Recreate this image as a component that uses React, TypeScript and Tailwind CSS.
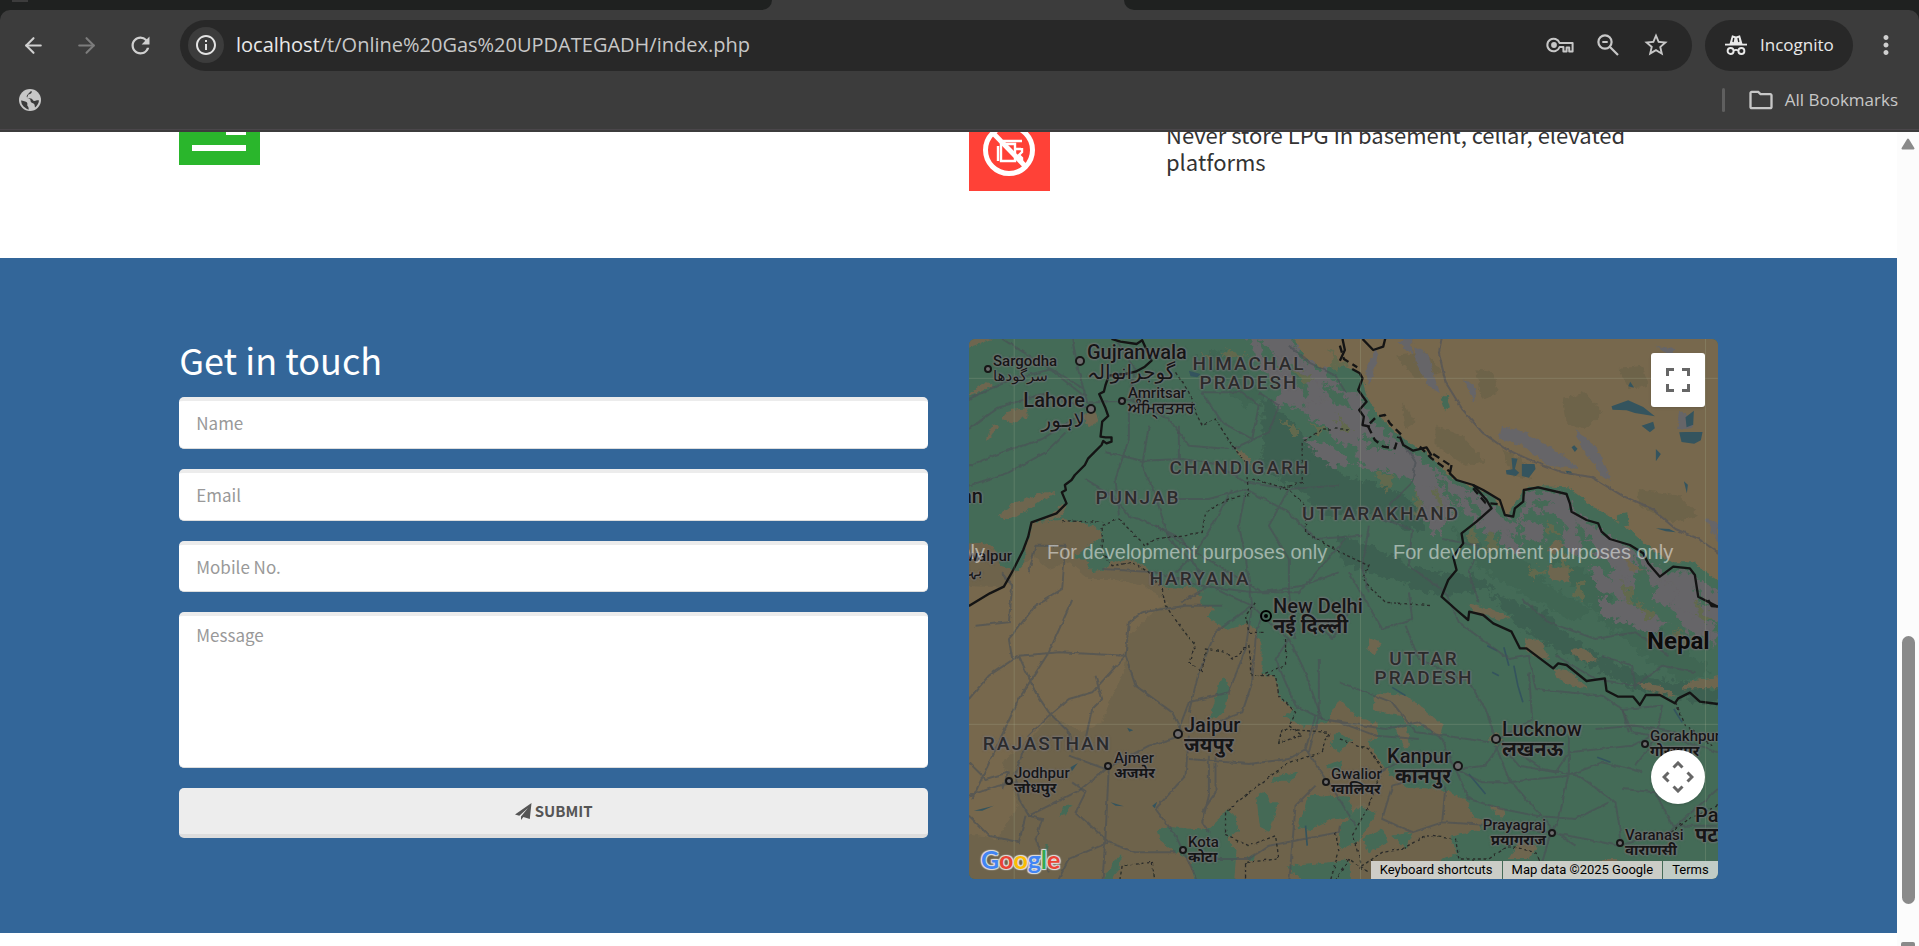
import { LuArrowLeft, LuArrowRight } from 'react-icons/lu';
import {
  MdInfoOutline,
  MdMoreVert,
  MdOutlineFolder,
  MdRefresh,
  MdStarOutline,
} from 'react-icons/md';

type Place = {
  name: string;
  native?: string;
  x: number;
  y: number;
  size: 'sm' | 'lg';
  end?: boolean;
  arabic?: boolean;
  dot?: [number, number];
};

const places: Place[] = [
  { name: 'Sargodha', native: 'سرگودھا', x: 24, y: 15, size: 'sm', arabic: true, dot: [19, 30] },
  { name: 'Gujranwala', native: 'گوجرانوالہ', x: 118, y: 3, size: 'lg', arabic: true, dot: [111, 22] },
  { name: 'Lahore', native: 'لاہور', x: 116, y: 51, size: 'lg', end: true, arabic: true, dot: [122, 70] },
  { name: 'Amritsar', native: 'ਅੰਮ੍ਰਿਤਸਰ', x: 159, y: 47, size: 'sm', dot: [153, 62] },
  { name: 'Multan', x: 14, y: 147, size: 'lg', end: true },
  { name: 'Bahawalpur', native: 'بہاولپور', x: -36, y: 210, size: 'sm', arabic: true },
  { name: 'New Delhi', native: 'नई दिल्ली', x: 304, y: 257, size: 'lg' },
  { name: 'Jaipur', native: 'जयपुर', x: 215, y: 376, size: 'lg', dot: [209, 395] },
  { name: 'Ajmer', native: 'अजमेर', x: 145, y: 412, size: 'sm', dot: [139, 427] },
  { name: 'Jodhpur', native: 'जोधपुर', x: 45, y: 427, size: 'sm', dot: [40, 442] },
  { name: 'Kota', native: 'कोटा', x: 219, y: 496, size: 'sm', dot: [214, 511] },
  { name: 'Gwalior', native: 'ग्वालियर', x: 362, y: 428, size: 'sm', dot: [357, 443] },
  { name: 'Lucknow', native: 'लखनऊ', x: 533, y: 380, size: 'lg', dot: [527, 400] },
  { name: 'Kanpur', native: 'कानपुर', x: 482, y: 407, size: 'lg', end: true, dot: [489, 427] },
  { name: 'Gorakhpur', native: 'गोरखपुर', x: 681, y: 390, size: 'sm', dot: [676, 405] },
  { name: 'Prayagraj', native: 'प्रयागराज', x: 577, y: 479, size: 'sm', end: true, dot: [583, 494] },
  { name: 'Varanasi', native: 'वाराणसी', x: 656, y: 489, size: 'sm', dot: [651, 504] },
  { name: 'Patna', native: 'पटना', x: 726, y: 466, size: 'lg' },
];

const regions = [
  { lines: ['HIMACHAL', 'PRADESH'], x: 280, y: 15 },
  { lines: ['CHANDIGARH'], x: 271, y: 119 },
  { lines: ['PUNJAB'], x: 169, y: 149 },
  { lines: ['UTTARAKHAND'], x: 412, y: 165 },
  { lines: ['HARYANA'], x: 231, y: 230 },
  { lines: ['RAJASTHAN'], x: 78, y: 395 },
  { lines: ['UTTAR', 'PRADESH'], x: 455, y: 310 },
];

const halo = '[text-shadow:0_0_2px_#78767a,0_0_2px_#78767a,0_0_3px_#78767a]';

const iconButton = 'flex items-center justify-center';

const field =
  'block w-full rounded-[5px] border-x-0 border-t-4 border-b border-t-[#ececec] border-b-[#dddddd] bg-white px-[17px] text-[17px] text-[#555555] outline-none placeholder:text-[#999999]';

const BrowserBar = () => {
  return (
    <header className="shrink-0 bg-[#3c3c3c] font-['Open_Sans','Noto_Sans',sans-serif]">
      <div className="flex h-[10px] bg-[#3c3c3c]">
        <div className="w-[772px] rounded-br-[14px] bg-[#1f2120]">
          <div className="ml-3 h-[2px] w-4 bg-[#3c3c3c]" />
        </div>
        <div className="w-[352px]" />
        <div className="flex-1 rounded-bl-[14px] bg-[#1f2120]" />
      </div>
      <div className="bg-[#1f2120]">
        <div className="flex h-[70px] items-center rounded-t-[10px] bg-[#3c3c3c]">
          <div className="flex w-[180px] items-center gap-7 pl-[21px] text-[#d0d0d0]">
            <button className={iconButton} aria-label="Back">
              <LuArrowLeft size={25} strokeWidth={2} />
            </button>
            <button className={`${iconButton} text-[#7c7c7c]`} aria-label="Forward">
              <LuArrowRight size={25} strokeWidth={2} />
            </button>
            <button className={iconButton} aria-label="Reload">
              <MdRefresh size={27} />
            </button>
          </div>
          <div className="flex h-[51px] flex-1 items-center rounded-full bg-[#282828] pr-[22px] pl-2">
            <button
              className="flex h-9 w-9 items-center justify-center rounded-full bg-[#3c3c3c] text-[#e3e3e3]"
              aria-label="Site information"
            >
              <MdInfoOutline size={24} />
            </button>
            <p className="flex-1 pl-3 text-[20px] leading-7 text-[#c7c7c7]">
              <span className="text-[#e9e9e9]">localhost</span>
              /t/Online%20Gas%20UPDATEGADH/index.php
            </p>
            <div className="flex items-center gap-[22px] text-[#c7c7c7]">
              <button className={iconButton} aria-label="Passwords">
                <svg width="28" height="18" viewBox="0 0 28 18" fill="none" stroke="currentColor">
                  <path
                    d="M13.6 7h13v8.4h-3.4v-4h-2.6v4h-3.2V11h-3.8a6.3 6.3 0 1 1 0-4Z"
                    strokeWidth="2"
                    strokeLinejoin="round"
                  />
                  <circle cx="8" cy="9" r="2.9" fill="currentColor" stroke="none" />
                </svg>
              </button>
              <button className={iconButton} aria-label="Zoom">
                <svg width="24" height="24" viewBox="0 0 24 24" fill="none" stroke="currentColor">
                  <circle cx="9" cy="9" r="6.6" strokeWidth="2.2" />
                  <path d="M14 14l8 8M6.3 9h5.4" strokeWidth="2.2" />
                </svg>
              </button>
              <button className={iconButton} aria-label="Bookmark this page">
                <MdStarOutline size={28} />
              </button>
            </div>
          </div>
          <button className="ml-[13px] flex h-[51px] w-[148px] items-center gap-[13px] rounded-full bg-[#282828] pl-5 text-[17px] text-[#e9e9e9]">
            <svg width="22" height="22" viewBox="0 0 22 22" fill="none" stroke="currentColor">
              <path d="M4.5 10 7 1.2l4 1.3 4-1.3L17.5 10Z" fill="currentColor" stroke="none" />
              <path d="M8 8l.8-4M13.8 8 13 4" stroke="#282828" strokeWidth="1.4" />
              <path d="M0 10.6h22" strokeWidth="1.8" />
              <circle cx="5.6" cy="17" r="3" strokeWidth="1.9" />
              <circle cx="16.4" cy="17" r="3" strokeWidth="1.9" />
              <path d="M8.6 16.6q2.4-1.4 4.8 0" strokeWidth="1.6" />
            </svg>
            Incognito
          </button>
          <button className="flex w-[66px] items-center justify-center text-[#d0d0d0]" aria-label="Menu">
            <MdMoreVert size={30} />
          </button>
        </div>
      </div>
      <nav className="flex h-[50px] items-center justify-between border-b border-[#4a464a] pr-[21px] pb-[10px] pl-[17px] text-[#c7c7c7]">
        <button className={iconButton} aria-label="Bookmark">
          <svg width="26" height="26" viewBox="0 0 26 26" fill="currentColor">
            <circle cx="13" cy="13" r="11" />
            <path
              d="M4 13.5c2 .5 5 .5 6 2 1 1.5-.5 3 1 4 1 1 0 2.5 1.5 3a9.5 9.5 0 0 1-8.500-9ZM14.5 4c1 2-1 3-3 3.5-1 .5 0 2-1.5 2.500 0 1.500 2 1 4 1.500s1.500 2.500 3.500 2.500 2-1 4.500-.5c-.3 3-2 5.500-4 7-.5-2 0-3-1.500-4s-3-1-3-3-2.500-1.500-3.500-3 .5-3 2-4.500 1-1.500 2.500-2Z"
              fill="#3c3c3c"
            />
          </svg>
        </button>
        <div className="flex items-center">
          <span className="h-6 w-[3px] rounded-full bg-[#5f5f5f]" />
          <button className="ml-[22px] flex items-center gap-[10px] text-[17px]">
            <MdOutlineFolder size={28} />
            All Bookmarks
          </button>
        </div>
      </nav>
      <div className="h-[2px] bg-[#3c3c3c]" />
    </header>
  );
};

const SafetyTips = () => {
  return (
    <section className="h-[126px] overflow-hidden bg-white">
      <div className="mx-auto grid w-[81.1%] grid-cols-2 gap-[41px]">
        <div className="-mt-12">
          <svg width="81" height="81" viewBox="0 0 81 81">
            <rect width="81" height="81" fill="#2ab62c" />
            <path d="M13 61h54v6H13zM47 40h20v11H47zM13 14h54v8H13z" fill="#fff" />
          </svg>
        </div>
        <div className="flex">
          <svg className="-mt-[22px] shrink-0" width="81" height="81" viewBox="0 0 81 81">
            <rect width="81" height="81" fill="#ff4137" />
            <g fill="none" stroke="#fff">
              <path d="M34 31h19M29 36v15M32 34h14v17H32ZM46 39h6M46 49h7M53 38v4l-3 3 3 3v3" strokeWidth="2.4" />
              <circle cx="40" cy="40" r="23.5" strokeWidth="5" />
              <path d="M24 23l33 34" strokeWidth="5" />
            </g>
          </svg>
          <p className="-mt-[11px] ml-[116px] max-w-[500px] text-[22px] leading-[27px] text-[#333333]">
            Never store LPG in basement, cellar, elevated platforms
          </p>
        </div>
      </div>
    </section>
  );
};

const ContactForm = () => {
  return (
    <form onSubmit={(event) => event.preventDefault()}>
      <h2 className="h-[58px] text-[36px] leading-10 text-white">Get in touch</h2>
      <div className="flex flex-col gap-5">
        <input type="text" aria-label="Name" placeholder="Name" className={`${field} h-[52px] pb-1`} />
        <input type="email" aria-label="Email" placeholder="Email" className={`${field} h-[52px] pb-1`} />
        <input type="tel" aria-label="Mobile No." placeholder="Mobile No." className={`${field} h-[51px] pb-1`} />
        <textarea
          aria-label="Message"
          placeholder="Message"
          className={`${field} h-[156px] resize-none py-[6px] leading-[26px]`}
        />
        <button
          type="submit"
          className="flex h-[50px] items-center justify-center gap-[3px] rounded-[5px] border-b-4 border-[#dddddd] bg-[#ededed] text-[15px] font-bold text-[#555555]"
        >
          <svg width="17" height="17" viewBox="0 0 17 17" fill="currentColor">
            <path d="M16.5 0 0 11.4l4.3 1.4L13 5 6 13.6V17l2.4-2.9 6.4 1.9Z" />
          </svg>
          SUBMIT
        </button>
      </div>
    </form>
  );
};

const MapTerrain = () => {
  return (
    <svg
      className="block h-full w-full"
      viewBox="0 0 2247 1620"
      preserveAspectRatio="xMidYMid slice"
      fill="none"
      aria-hidden="true"
    >
      <defs>
        <filter id="ragged" x="-5%" y="-5%" width="110%" height="110%">
          <feTurbulence type="fractalNoise" baseFrequency="0.06" numOctaves="3" seed="4" />
          <feDisplacementMap in="SourceGraphic" scale="18" xChannelSelector="R" yChannelSelector="G" />
        </filter>
        <filter id="rugged" x="-5%" y="-5%" width="110%" height="110%">
          <feTurbulence type="fractalNoise" baseFrequency="0.05" numOctaves="3" seed="7" />
          <feDisplacementMap in="SourceGraphic" scale="45" xChannelSelector="R" yChannelSelector="G" />
        </filter>
        <filter id="wavy" x="-5%" y="-5%" width="110%" height="110%">
          <feTurbulence type="fractalNoise" baseFrequency="0.05" numOctaves="2" seed="9" />
          <feDisplacementMap in="SourceGraphic" scale="10" xChannelSelector="R" yChannelSelector="G" />
        </filter>
      </defs>
      <rect width="2247" height="1620" fill="#446b57" />

      <g filter="url(#ragged)">
        {/* southern and western plains */}
        <path
          fill="#6e644c"
          d="M-40 613 35 608 75 625 95 680 160 700 188 550 278 543 345 550 395 575 400 600 355 620 315 655 350 660 370 700 415 690 425 670 490 662 540 690 560 725 600 750 670 745 735 770 735 810 713 833 773 873 843 853 878 913 878 1003 918 1013 933 1073 973 1113 943 1133 1003 1163 1073 1150 1113 1083 1163 1133 1223 1153 1228 1198 1193 1203 1213 1233 1258 1303 1313 1343 1433 1353 1493 1383 1513 1433 1543 1443 1533 1473 1443 1493 1463 1543 1413 1568 1300 1660H-40Z"
        />
        <path
          fill="#77684e"
          d="M-40 740 100 745 190 650 240 690 300 670 360 720 440 720 520 740 600 790 540 830 480 890 465 1000 425 1080 400 1150 340 1180 250 1130 170 1210 100 1270 150 1400 80 1500-40 1480Z"
        />
        {/* high plateau */}
        <path
          fill="#77684e"
          d="M953-40 1010 60 1060 90 1113 75 1175 105 1195 175 1225 225 1285 285 1375 345 1445 415 1565 465 1615 530 1675 440 1795 445 1870 500 1965 560 2060 640 2110 670 2175 670 2290 760V-40Z"
        />
        <path
          fill="#6d6349"
          d="M1280 50l90-10 50 60-80 20ZM1400 260l80 30 70 80-60 10-90-60ZM1780 180l70-20 50 60-50 50-60-20ZM2010 450l120 20 60 60-80 20-100-50ZM1950 90l70-10 20 60-60 10ZM1520 90l50 10 20 60-50 20ZM1300 190l40 60-30 20ZM1600 330l60 30 30 60-60-10Z"
        />
      </g>

      <g filter="url(#rugged)">
        {/* foothills */}
        <path
          fill="#3d6151"
          d="M880 170l100 90 70 90 80 60 160 50 90 80-30 40-160-60-120 10-80-80-110-60ZM1110 590l100 30 130 70 180 20 60 40-170 20-180-60-110-40ZM1560 760l170 60 90 90 200 100 227 40v50l-250-50-240-120-110-70Z"
        />
        <path
          fill="#3f6653"
          d="M680 60l60-30 90 60 60 90-70 20-60-80ZM1450 560l90 60 120 30 80 90 130 70-50 40-170-90-140-90ZM1740 650l140 60 60 90 80 60-90 20-100-120ZM1940 870l100-20 100 70 90 80-90 30-120-80Z"
        />
        {/* snow and rock */}
        <path
          fill="#666567"
          d="M830-40H950L1000 60 1070 100 1130 160 1170 160 1210 250 1290 310 1370 370 1450 430 1550 480 1600 530 1650 550 1675 460 1780 460 1820 520 1890 570 2000 640 2080 700 2170 700 2290 800V870L2200 830 2150 880 2110 800 2060 740 2010 680 1990 750 1930 680 1880 640 1860 590 1800 600 1790 550 1740 520 1670 520 1640 590 1600 570 1560 600 1500 530 1440 480 1460 530 1400 470 1360 500 1330 420 1260 400 1170 380 1160 320 1100 310 1070 260 1010 230 990 170 940 170 930 130 900 110 860 70Z"
        />
        <path
          fill="#666567"
          d="M940 110l100 20 30 50-70 20-80 0ZM1000 300l90 20 60 50-60 20ZM1350 440l70 10 30 80-40 60-50-60ZM1660 540l70 20-10 60-60-20ZM1600 560l60 60-20 40-50-60ZM1790 570l60 20-20 60-50-30ZM1860 680l60 20 10 70-40-10ZM1930 680l60 50-10 70-60-40ZM2070 720l60 30-30 60-50-30ZM1890 780l90 10 110 60-40 40-80-40-80-20ZM2120 800l120 60v60l-100-50Z"
        />
        {/* valleys cutting into the range */}
        <path
          fill="#446b57"
          d="M860-10l50 40 30 70-50-40ZM960 80l50 30 10 60-40-30ZM1060 130l70 40 20 40-60-20ZM1170 290l60 10 50 30-70 0ZM1400 400l40 50 40 50-50-30ZM1490 460l40 40 20 50-40-30ZM1690 480l60 10-40 30ZM1820 540l40 60-30 10ZM2000 650l40 60-30 0ZM2180 740l40 60-30 0Z"
        />
        <path
          fill="#62694e"
          d="M690 40l40 10 10 30ZM930 240l60 30-10 22ZM970 90l70 30-30 20ZM1220 400l60 10-30 50ZM1340 450l30 80-30 10ZM1390 440l40 60-20 20ZM1560 570l30 50-40 30ZM1510 560l20 60-40-10ZM1780 640l30 60-40 20ZM2000 790l60 30-20 30ZM2120 860l40 50-40 20ZM1680 680l60 20-50 20ZM1830 720l20 70-40-20ZM1010 240l70 40-40-5ZM760 30l80 20-60 10ZM1100 220l50 60-30-5ZM1960 720l40 60-30 10ZM2170 780l60 60-30 10ZM1080 30l60 50-40 10ZM1730 540l50 50-40 0Z"
        />
      </g>

      <g filter="url(#ragged)">
        <path
          fill="#666567"
          d="M1600 260l70 20 130 80 30 30-90-10-80-60-70-20ZM1820 270l60 50 50 110-30-20-60-80ZM1340 20l40 30 30 110-30-20-40-70ZM1485 120l40 30-10 40ZM1290 10l40-20 0 60ZM2060 20l60 10-20 20ZM1190 90l30-60 10 20-30 90ZM2130 215l30 10 15 40-50 10ZM2210 540l37 10v60Z"
        />
        {/* scattered dry ground */}
        <path
          fill="#6e6650"
          d="M-40 40 70 0 110-30-40-30ZM-40 190 50 130 75 140-40 185ZM98 243l25-30 50-5v25l-45 20ZM53 303l20-50 18 10-28 35ZM88 528l45-35 90-33h42l-52 28-70 45-50 10ZM223 548l60-55 10 10-15 30ZM340 235l35-30 15 40-30 20ZM795 320l40 30 15 30-30-20ZM1213 1083l20-22 70 7 40 25 80 65-10 35-50-30-50-10-10-20-90-20ZM1278 1168l35-5 10 60-15 2ZM1198 938l5-40 35 15-20 35ZM1803 933l30-8 30 13 20 30-50-5ZM1668 898l45 5 25 55-25 5-40-30ZM1753 988l40 5 68 55-48-5-50-25ZM2003 1028l70 10 50 35-50-10-60-20ZM2133 1053l40-30 90-10v35l-90 0ZM1498 793l45 10 80 30-30 10-80-25ZM1735 680l60 10 10 40-60-10ZM1560 1200l20-20 20 20-20 20ZM1560 1400l50 10-10 30ZM1650 1510l60 10-30 40-60 0ZM1135 1420l50-30 20 20-30 30ZM1890 1560h60l-20 20ZM1735 630l30-30 20 20-30 30ZM1960 650l60 40-30 10Z"
        />
        {/* scattered farmland */}
        <path
          fill="#446b57"
          d="M725 1135l25-100 15-20 15 35-10 60-30 30ZM563 1473l30-10 120 10 30-25 30-35 30 20 5 40-35 30 30 30-10 130-100 0-30-100-50-30-40-30ZM863 1373l25-15 15 35h25l-15 50-10 35-30-15-5-40ZM1013 1383l20-15 110 5 10 60-70 10-60 30-40-10 20-40ZM913 1313l75-15-25 30h-50ZM833 1553l25-5-5 20ZM953 1583l100-10 90-10v90l-120-10ZM1073 1283l50-20-10 40ZM1083 1223l20-45 50 25-40 35ZM443 1553l20 0-20 45-30 50-20-10ZM273 1433l10-30 25-8-15 28ZM1113 1463l60-60 50 20-50 80-60 30ZM230 1515l10 0-5 30-20 10ZM1180 1500l60-30 20 40-60 30ZM1270 1490l60-10-20 50ZM1416 180l20-15 10 40-20 12ZM1940 530l35-8 5 35-20 10ZM690 760l60 0 60 20 60 10 0 40-60 10-40-30-70-10Z"
        />
      </g>

      {/* lakes */}
      <path
        fill="#34545e"
        d="M1928 202l50-18 45 20 35 28-60-10-25-8-42-2ZM2018 260l35-12 5 20-15 12ZM2131 280l20-1h50l-5 25-20 10-38-5ZM2150 235l25-20-2 42-20 8ZM1984 128l12 18-18-4ZM2061 330l15 15-15 22ZM1659 375h38l3 15-20 26-21-5ZM1628 357l18 2-8 30 13 12-10 10-28-5-2-12 20-3ZM1808 325l8-6 10 10-8 10ZM1790 395l15 2 10 12-20-5ZM2145 427l12 10-3 26ZM2061 568l40 2 20 10-30-3ZM660 95l35 10-10 10-20-3ZM305 1285l22-13-18 25ZM425 1390l40 12-25-2ZM550 1400l15-12-7 20ZM15 1415l60-15-35 15ZM475 1166l18 8-12 4Z"
      />
      <path
        stroke="#34545e"
        strokeWidth="5"
        d="M1605 925l15 55M1635 980l12 60 15 50M1570 1000l20 10M1555 920l30 15M1500 1305l50 60M2115 1110l25 40M1010 1460l5 60M1885 1255l40 15M1270 1045l40 25"
      />

      {/* roads */}
      <g stroke="#4a5055" strokeOpacity="0.65" strokeWidth="6" strokeLinejoin="round" filter="url(#wavy)">
        <path d="M0 270 90 205 220 165 350 205M0 180 130 120 250 90 345 150M0 380 100 340 220 300 330 230M0 440 120 400 230 340 290 280M310 0 330 100 355 190 440 190 540 170M100 0 230 80 345 170M440 0 500 90 480 180 600 240 660 320 780 330" />
        <path d="M350 420 430 470 480 530 560 560 640 600 700 720M410 340 520 365 640 360 740 375 830 430 960 450 1110 440M540 260 520 380 560 470 600 600 700 700M630 260 630 360M480 190 480 300 440 420 450 530M600 480 720 480 830 450 960 520 1040 600 1180 590M830 460 810 560 830 650 850 800M790 450 730 560 680 640 620 700M960 450 900 560 960 660 960 760 980 900" />
        <path d="M700 160 760 250 850 300 870 200 820 160ZM790 330 900 280 930 200 870 160M560 560 680 640 780 700 880 760 1000 740 1110 700M400 690 560 700 700 740 850 760 990 760 1130 600M850 800 780 770 720 740 640 790M850 800 900 850 960 900 1000 980 1060 1140M850 800 830 930 780 1060 660 1090 630 1170M880 820 860 900 850 1030 820 1120 720 1160M850 800 740 880 690 1000 660 1120" />
        <path d="M310 783 240 940 150 1080 80 1230 10 1380M0 1080 60 1010 150 950 270 940 470 950 480 850 520 820 650 800 760 800M470 950 500 1040 610 1120 640 1180M470 950 370 1060 300 1080 240 1130 180 1190 140 1300 150 1380 180 1430 330 1355 410 1290 540 1220 640 1190M150 950 200 1060 240 1120 300 1180 310 1240M380 1010 400 1080 370 1110 350 1200M20 860 120 850 130 740 100 700M130 960 120 900 200 800 280 750 290 620 200 620 180 700M0 1270 50 1320 120 1300 100 1350M0 1370 90 1340 140 1330" />
        <path d="M660 1190 650 1310 560 1410 620 1490 670 1590 690 1640M660 1260 840 1275 960 1260 1010 1230 1040 1130M720 1250 720 1370 700 1450 720 1480M740 1250 740 1360 700 1420M420 1280 410 1490 400 1640M300 1250 410 1290M310 1330 350 1360 320 1420 420 1510 500 1540 620 1540M180 1430 220 1440 200 1500 240 1600M0 1430 60 1490 150 1510 170 1430M420 1510 300 1560 260 1640M690 1560 840 1560 900 1520 1110 1480 1113 1460M1010 1230 1080 1330 1160 1460M960 1640 980 1400 1040 1340" />
        <path d="M1020 830 1090 900 1140 820 1180 780M960 900 920 960 980 1100 1060 1140 1113 1150M1050 960 1050 1130 1020 1240M1113 1030 1270 1090 1340 1180 1430 1190 1560 1210M1060 1140 1250 1170 1350 1150 1420 1200 1460 1290M1113 1150 1220 1190 1350 1200M1140 700 1240 870 1330 840 1320 760M1310 860 1350 960 1500 1030 1550 1110 1580 1200M1200 560 1180 690 1200 760M1240 540 1330 570 1320 680 1430 760 1470 850 1620 960M1420 600 1530 620 1500 700 1530 790M1680 1000 1690 1140 1590 1200M1700 1050 1900 1070 1960 1110 1990 1180 2120 1200 2247 1240M1620 960 1680 950 1700 1050" />
        <path d="M1580 1200 1650 1280 1760 1300 1800 1240 1990 1220 2050 1190M1460 1290 1550 1280 1590 1220 1600 1210 1720 1290 1830 1310 1940 1390 1960 1520M1460 1290 1540 1330 1620 1330 1700 1320 1800 1310 1900 1270 2020 1300M1580 1220 1620 1320 1690 1400 1760 1480 1820 1520M1800 1190 1800 1300 1770 1440 1740 1500 1700 1640M1460 1290 1500 1380 1600 1410 1700 1430 1820 1440 1920 1390M1430 1340 1420 1450 1330 1480 1240 1440 1270 1340 1400 1300M1420 1450 1600 1460 1740 1480 1850 1500 1950 1520 2100 1480 2247 1350M1960 1350 2060 1360 2110 1460 2247 1460M1980 1180 1960 1110 2080 1100 2060 1200 2000 1280M1880 1170 2000 1160 2120 1180M1200 1320 1340 1240 1450 1270" />
        <path d="M1130 160 1100 110 1020 70 960 20M1290 290 1340 370 1330 430 1260 500M1760 950 1880 1020 2000 1040 2080 980 2180 1000M1660 780 1740 850 1880 900 2000 880 2100 950M1900 950 1990 980 2000 1050" />
        <path stroke="#595755" strokeOpacity="0.9" d="M1420-10 1410 40 1430 130 1480 210 1540 280 1610 330 1700 370 1780 400 1870 415 1960 470 2050 510 2120 570 2190 600 2260 650" />
      </g>

      {/* state lines */}
      <g stroke="#2a2c2a" strokeWidth="4" strokeDasharray="9 8" filter="url(#wavy)">
        <path d="M620 100 660 160 680 220 700 260 740 240 790 320 830 370 840 470 780 480 710 520 700 580 560 600 530 620 450 540 400 560 400 640 430 680 490 670 540 700 580 750 590 800 640 870 680 920 660 970 700 1000 710 930 770 940 790 960 840 920 850 1010 920 1010 930 1070 980 1120 960 1160 1000 1190 930 1210 940 1170 1080 1180 1060 1240 960 1270 840 1360 770 1420 770 1490 840 1520 920 1490 930 1560 830 1570 830 1640" />
        <path d="M280 545 400 550M850 420 960 450 1010 500 1010 580 1060 610 1113 640 1200 680 1180 720 1250 790 1390 800M1140 270 1060 270 1000 310 1000 430 930 450M950 900 950 980 870 1010M860 790 830 830 840 880 890 880M1113 1200 1200 1230 1240 1290 1200 1400 1150 1490 1180 1580 1240 1540 1300 1530 1370 1490 1460 1500 1470 1560 1560 1560 1620 1520 1700 1540 1740 1620M1100 1480 1110 1540 1080 1640M1090 1640 1140 1560 1200 1600M2120 1090 2150 1160 2230 1220M2247 1400 2160 1440 2080 1500M450 1640 460 1580 550 1570 560 1640" />
      </g>

      {/* borders */}
      <g stroke="#141414" strokeWidth="7" strokeLinejoin="round">
        <path d="M428 0 455 8 503 15 520 4 548 65 528 83 500 98 470 105 420 110 410 138 405 158 391 165 410 208 418 231 400 248 395 293 410 295 428 295 428 308 413 313 403 306 398 318 373 343 358 358 348 378 318 408 308 423 288 438 291 453 279 460 293 493 263 523 188 550 178 593 163 633 133 693 105 743 63 763 0 801" />
        <path d="M1121 0 1128 33 1113 65M1150 90 1173 103 1181 118 1168 153 1193 188 1171 213 1185 233 1181 258 1203 263M1293 293 1303 318 1333 335 1373 325 1388 350M1448 378 1443 403 1463 423 1513 438 1543 453 1593 483 1608 528 1633 533 1638 508 1663 488 1665 453 1708 445 1793 465 1803 493 1808 518 1853 543 1888 553 1898 578 1923 600 1983 618 2023 643 2038 673 2073 713 2113 683 2163 688 2178 708 2188 773 2247 803" />
        <path d="M1181 0 1213 33 1243 23 1250-5M1513 438 1553 483 1568 508 1523 548 1478 583 1483 613 1453 653 1463 693 1438 723 1418 773 1463 813 1498 843 1501 818 1543 828 1573 853 1628 878 1653 928 1673 928 1753 988 1768 973 1793 978 1853 1026 1908 1018 1913 1055 1948 1073 1993 1073 2013 1098 2031 1068 2073 1068 2118 1093 2128 1078 2163 1061 2193 1088 2247 1095M2218 783 2228 801 2247 803" />
        <path strokeDasharray="22 14" d="M1113 20 1125 60 1165 85M1203 253 1223 233 1248 228 1263 253 1303 293M1198 263 1218 303 1243 323 1278 328 1288 293M1353 323 1388 358 1443 398M1393 345 1443 378M1513 448 1550 492 1593 496" />
      </g>

      <g stroke="#b8c0a0" strokeOpacity="0.22" strokeWidth="3">
        <path d="M136 0v1620M1175 0v1620M2210 0v1620M0 118h2247M0 1156h2247" />
      </g>
    </svg>
  );
};

const GoogleLogo = () => {
  return (
    <a
      href="#google"
      aria-label="Open this area in Google Maps"
      className="absolute bottom-[2px] left-3 font-[Lato,sans-serif] text-[25px] leading-9 font-bold [text-shadow:0_0_1px_#ddd,1px_1px_1px_#ddd,-1px_-1px_1px_#ddd,1px_-1px_1px_#ddd,-1px_1px_1px_#ddd]"
    >
      <span className="text-[#4285f4]">G</span>
      <span className="text-[#ea4335]">o</span>
      <span className="text-[#fbbc04]">o</span>
      <span className="text-[#4285f4]">g</span>
      <span className="text-[#34a853]">l</span>
      <span className="text-[#ea4335]">e</span>
    </a>
  );
};

const PlaceLabel = ({ place }: { place: Place }) => {
  const large = place.size === 'lg';
  return (
    <>
      <p
        className={`absolute font-medium whitespace-nowrap text-[#161616] ${halo} ${
          large ? 'text-[20px] leading-5' : 'text-[15px] leading-[15px]'
        } ${place.end ? '-translate-x-full text-right' : ''}`}
        style={{ left: place.x, top: place.y }}
      >
        {place.name}
        {place.native && (
          <>
            <br />
            <span className={place.arabic ? 'font-normal' : 'font-bold'}>{place.native}</span>
          </>
        )}
      </p>
      {place.dot && (
        <span
          className={`absolute -translate-1/2 rounded-full border-2 border-[#161616] bg-[#6e6c6e] ${
            large ? 'h-[10px] w-[10px]' : 'h-2 w-2'
          }`}
          style={{ left: place.dot[0], top: place.dot[1] }}
        />
      )}
    </>
  );
};

const MapView = () => {
  return (
    <div className="relative h-[540px] overflow-hidden rounded-[6px] bg-[#446b57] font-[Roboto,'Noto_Sans','Noto_Sans_Devanagari','DejaVu_Sans',sans-serif]">
      <MapTerrain />
      {regions.map((region) => (
        <p
          key={region.x}
          className={`absolute -translate-x-1/2 text-center text-[19px] leading-[19px] font-medium tracking-[2px] whitespace-nowrap text-[#2b2b2b] ${halo}`}
          style={{ left: region.x, top: region.y }}
        >
          {region.lines.map((line) => (
            <span key={line} className="block">
              {line}
            </span>
          ))}
        </p>
      ))}
      {places.map((place) => (
        <PlaceLabel key={place.name} place={place} />
      ))}
      <span className="absolute top-[277px] left-[297px] flex h-3 w-3 -translate-1/2 items-center justify-center rounded-full border-2 border-black">
        <span className="h-1 w-1 rounded-full bg-black" />
      </span>
      <p className={`absolute top-[290px] left-[678px] text-[24px] leading-6 font-bold text-[#0c0c0c] ${halo}`}>
        Nepal
      </p>

      <div className="absolute top-[201px] left-0 font-['Liberation_Sans',Arial,sans-serif] text-[20px] leading-6 whitespace-nowrap text-white/50">
        <p className="absolute left-4 -translate-x-full">For development purposes only</p>
        <p className="absolute left-[78px]">For development purposes only</p>
        <p className="absolute left-[424px]">For development purposes only</p>
      </div>

      <button
        aria-label="Toggle fullscreen view"
        className="absolute top-[14px] right-[13px] flex h-[54px] w-[54px] items-center justify-center rounded-[3px] bg-white shadow"
      >
        <svg width="24" height="24" viewBox="0 0 24 24" fill="none" stroke="#666" strokeWidth="3">
          <path d="M1.5 8V1.5H8M16 1.5h6.5V8M22.5 16v6.5H16M8 22.5H1.5V16" />
        </svg>
      </button>
      <button
        aria-label="Map camera controls"
        className="absolute right-[13px] bottom-[75px] flex h-[54px] w-[54px] items-center justify-center rounded-full bg-white shadow"
      >
        <svg width="32" height="32" viewBox="0 0 32 32" fill="none" stroke="#666" strokeWidth="3">
          <path d="M11.5 6.5 16 2l4.5 4.5M11.5 25.5 16 30l4.5-4.5M6.5 11.5 2 16l4.5 4.5M25.5 11.5 30 16l-4.5 4.5" />
        </svg>
      </button>

      <GoogleLogo />
      <div className="absolute right-0 bottom-0 flex h-[18px] gap-[1px] text-[13px] leading-[18px] whitespace-nowrap text-black">
        <button className="bg-[#d3d3ce]/95 px-[9px]">Keyboard shortcuts</button>
        <span className="bg-[#d3d3ce]/95 px-[9px]">Map data ©2025 Google</span>
        <a href="#terms" className="bg-[#c8d2cc]/95 px-[9px]">
          Terms
        </a>
      </div>
    </div>
  );
};

const Scrollbar = () => {
  return (
    <div className="flex w-[22px] shrink-0 flex-col items-center bg-[#fcfcfc] pt-[6px]" aria-hidden="true">
      <svg width="14" height="12" viewBox="0 0 14 12">
        <path d="M7 1.5 12.5 10.5H1.5Z" fill="#8a8a8a" stroke="#8a8a8a" strokeWidth="2" strokeLinejoin="round" />
      </svg>
      <div className="grow-[486]" />
      <div className="w-[13px] grow-[268] rounded-full bg-[#8a8a8a]" />
      <div className="grow-[38]" />
      <div className="h-1 w-[14px] rounded-t-[2px] bg-[#8a8a8a]" />
    </div>
  );
};

const App = () => {
  return (
    <div className="flex h-screen flex-col overflow-hidden bg-white font-['Noto_Sans_CJK_SC',sans-serif]">
      <BrowserBar />
      <div className="flex flex-1">
        <main className="flex-1">
          <SafetyTips />
          <section className="bg-[#336699] pt-[81px] pb-[54px]">
            <div className="mx-auto grid w-[81.1%] grid-cols-2 gap-[41px]">
              <ContactForm />
              <MapView />
            </div>
          </section>
        </main>
        <Scrollbar />
      </div>
    </div>
  );
};

export default App;
